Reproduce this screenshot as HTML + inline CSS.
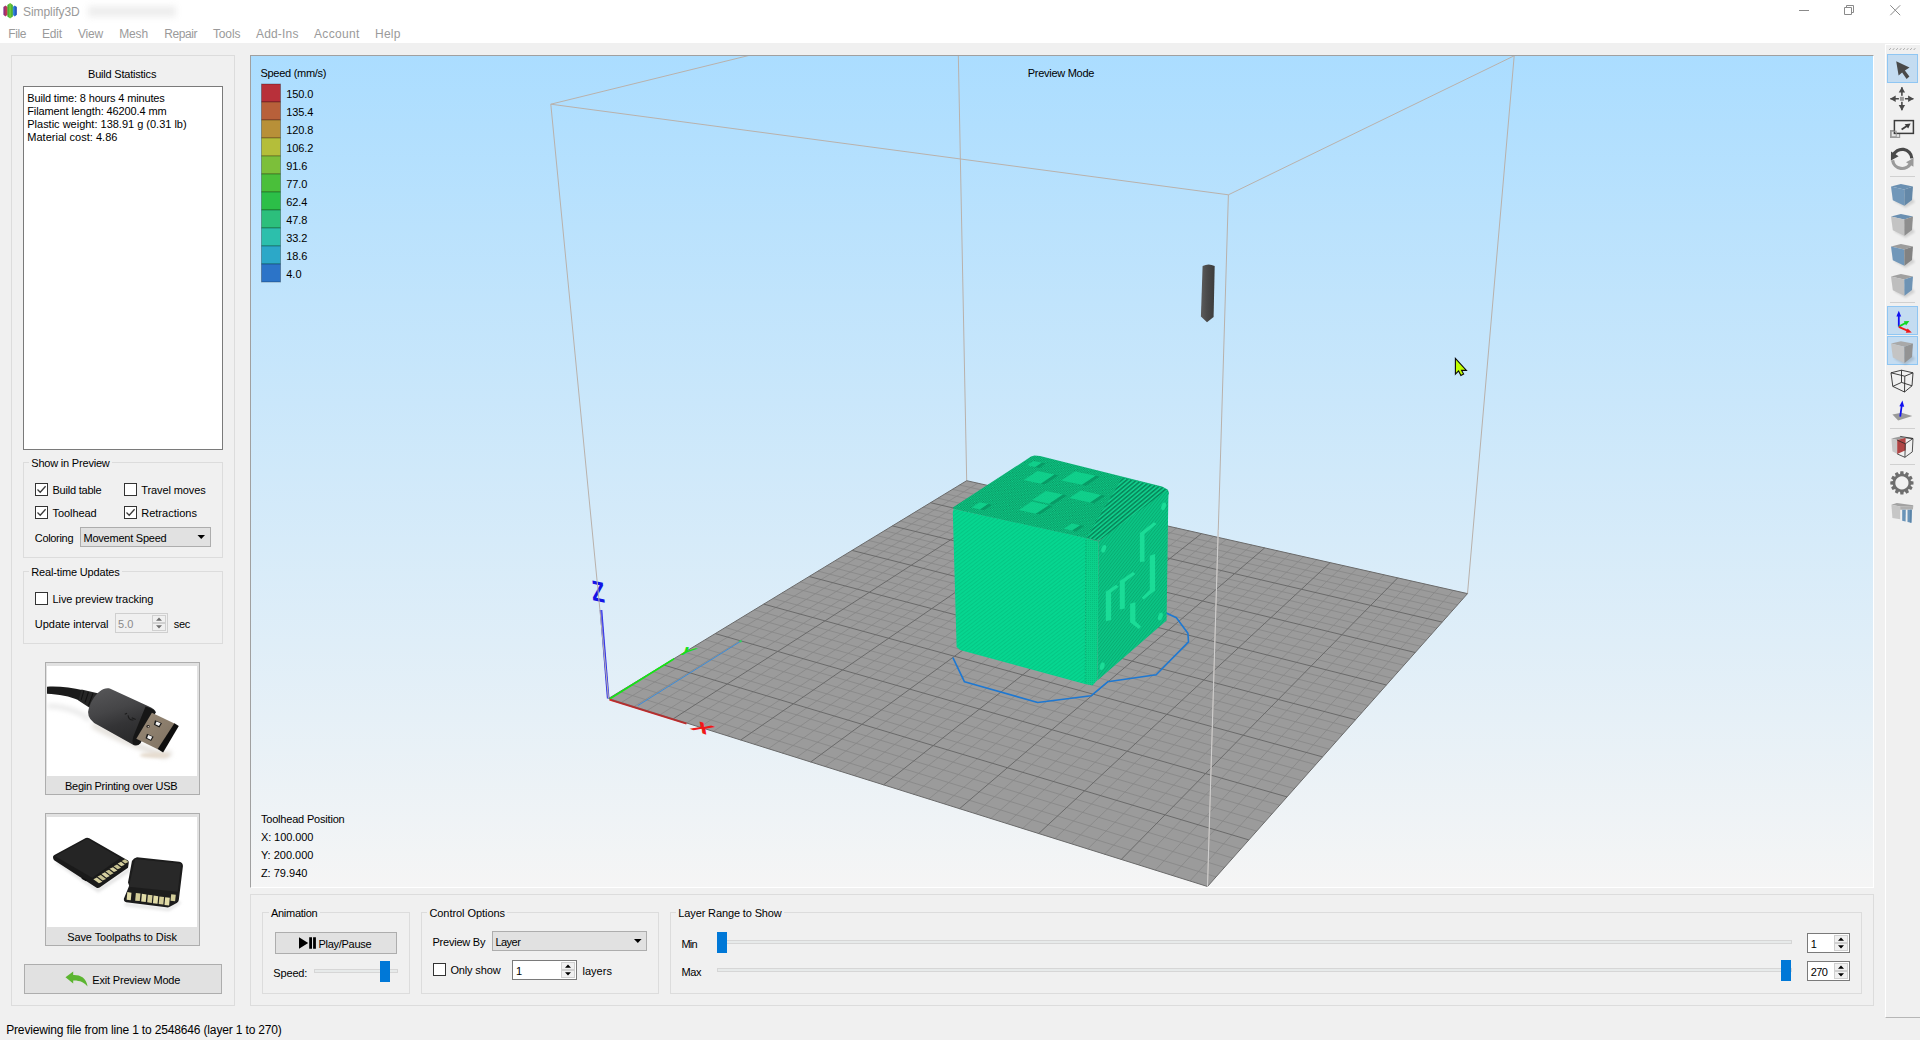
<!DOCTYPE html>
<html><head><meta charset="utf-8"><title>Simplify3D</title>
<style>
html,body{margin:0;padding:0}
body{width:1920px;height:1040px;overflow:hidden;background:#f0f0f0;position:relative;font-family:"Liberation Sans", sans-serif;font-size:11px}
.t{position:absolute;white-space:pre;line-height:1;font-family:"Liberation Sans", sans-serif}
.a{position:absolute;box-sizing:border-box}

.gb{position:absolute;box-sizing:border-box;border:1px solid #dcdcdc}
.cb{position:absolute;box-sizing:border-box;width:13px;height:13px;border:1px solid #333;background:#fff}
.btn{position:absolute;box-sizing:border-box;border:1px solid #adadad;background:#e1e1e1}
.gt{position:absolute;background:#f0f0f0;height:12px}
.spin{position:absolute;box-sizing:border-box;border:1px solid #7a7a7a;background:#fff}
.groove{position:absolute;box-sizing:border-box;height:4px;background:#e7eaea;border:1px solid #d6d6d6}
.handle{position:absolute;background:#0078d7}
.sel{position:absolute;box-sizing:border-box;background:#c4dcf1;border:1px solid #8fc6f3}
.sep{position:absolute;height:1px;background:#d0d0d0}

</style></head><body>
<div class="a" style="left:0px;top:0px;width:1920px;height:43px;background:#fff"></div>
<svg class="a" style="left:0;top:0" width="22" height="22" viewBox="0 0 22 22">
<defs><linearGradient id="ic1" x1="0" x2="1"><stop offset="0" stop-color="#7a2a8c"/><stop offset="1" stop-color="#e0403a"/></linearGradient>
<linearGradient id="ic2" x1="0" x2="1"><stop offset="0" stop-color="#2f9a2a"/><stop offset=".5" stop-color="#7ad03a"/><stop offset="1" stop-color="#2f9a2a"/></linearGradient>
<linearGradient id="ic3" x1="0" x2="1"><stop offset="0" stop-color="#3aa0e8"/><stop offset="1" stop-color="#1a3fae"/></linearGradient></defs>
<path d="M3.4 7 L5.5 5.4 L7.6 7 V14.8 L5.5 16.4 L3.4 14.8Z" fill="url(#ic1)"/>
<path d="M12.6 7 L14.7 5.4 L16.8 7 V14.8 L14.7 16.4 L12.6 14.8Z" fill="url(#ic3)"/>
<path d="M7.4 5 L10.1 3 L12.8 5 V16.6 L10.1 18.6 L7.4 16.6Z" fill="url(#ic2)"/>
</svg>
<div class="a" style="left:88px;top:6px;width:88px;height:11px;background:#eeeeee;filter:blur(3px)"></div>
<svg class="a" style="left:1780px;top:0" width="140" height="22" viewBox="0 0 140 22">
<path d="M19 10.5 H29" stroke="#8a8a8a" stroke-width="1" fill="none"/>
<path d="M64.5 7.5 H71.5 V14.5 H64.5Z M66.5 7.5 V5.5 H73.5 V12.5 H71.5" stroke="#8a8a8a" stroke-width="1" fill="none"/>
<path d="M110.3 5.3 L120.2 15.2 M120.2 5.3 L110.3 15.2" stroke="#8a8a8a" stroke-width="1" fill="none"/>
</svg>
<div class="gb" style="left:11px;top:55px;width:224px;height:951px;"></div>
<div class="a" style="left:23px;top:86px;width:200px;height:364px;border:1px solid #7a7a7a;background:#fff"></div>
<div class="gb" style="left:23px;top:462px;width:200px;height:96px;"></div>
<div class="gt" style="left:29px;top:458px;width:83px;height:12px;"></div>
<div class="gb" style="left:23px;top:571px;width:200px;height:73px;"></div>
<div class="gt" style="left:29px;top:567px;width:93px;height:12px;"></div>
<div class="cb" style="left:35px;top:483px"><svg width="11" height="11" viewBox="0 0 11 11" style="position:absolute;left:0;top:0"><path d="M1.5 5.5 L4.2 8.2 L9.6 2.2" fill="none" stroke="#3a3a3a" stroke-width="1.3"/></svg></div>
<div class="cb" style="left:124px;top:483px"></div>
<div class="cb" style="left:35px;top:506px"><svg width="11" height="11" viewBox="0 0 11 11" style="position:absolute;left:0;top:0"><path d="M1.5 5.5 L4.2 8.2 L9.6 2.2" fill="none" stroke="#3a3a3a" stroke-width="1.3"/></svg></div>
<div class="cb" style="left:124px;top:506px"><svg width="11" height="11" viewBox="0 0 11 11" style="position:absolute;left:0;top:0"><path d="M1.5 5.5 L4.2 8.2 L9.6 2.2" fill="none" stroke="#3a3a3a" stroke-width="1.3"/></svg></div>
<div class="btn" style="left:80px;top:527px;width:131px;height:20px;"></div>
<svg class="a" style="left:196px;top:534px" width="10" height="6"><path d="M1.5 1 H9 L5.25 5Z" fill="#000"/></svg>
<div class="cb" style="left:35px;top:592px"></div>
<div class="a" style="left:115px;top:613px;width:53px;height:20px;border:1px solid #cfcfcf;background:#f0f0f0"></div>
<div class="a" style="left:152px;top:615px;width:14px;height:8px;border:1px solid #d0d0d0;background:#f0f0f0"></div><div class="a" style="left:152px;top:623px;width:14px;height:8px;border:1px solid #d0d0d0;background:#f0f0f0"></div><svg class="a" style="left:152px;top:615px" width="14" height="16"><path d="M4 5.8 l3 -3.2 l3 3.2z M4 10.2 l3 3.2 l3 -3.2z" fill="#6e6e6e"/></svg>
<div class="btn" style="left:45px;top:662px;width:155px;height:133px;"></div>
<div class="a" style="left:47px;top:666px;width:150px;height:110px;background:#fff"></div>
<svg class="a" style="left:47px;top:666px" width="150" height="110" viewBox="26 52 1299.75 953.15"><defs><filter id="bl1" x="-20%" y="-50%" width="140%" height="200%"><feGaussianBlur stdDeviation="22"/></filter>
<filter id="bl2" x="-20%" y="-50%" width="140%" height="200%"><feGaussianBlur stdDeviation="14"/></filter>
<linearGradient id="ub" x1="0" y1="0" x2="0.35" y2="1"><stop offset="0" stop-color="#58585a"/><stop offset=".45" stop-color="#454547"/><stop offset=".7" stop-color="#343436"/><stop offset="1" stop-color="#2a2a2b"/></linearGradient>
<linearGradient id="um" x1="0" y1="0" x2="1" y2="1"><stop offset="0" stop-color="#9a8b78"/><stop offset="1" stop-color="#7d7060"/></linearGradient></defs>
<path d="M30 400 C150 395 300 440 400 520" stroke="#e4e4e4" stroke-width="34" fill="none" filter="url(#bl1)"/>
<path d="M420 560 C560 640 700 700 800 740 L1040 830 L1100 800" stroke="#e0dcd6" stroke-width="46" fill="none" filter="url(#bl1)"/>
<ellipse cx="960" cy="825" rx="130" ry="24" fill="#e6dccf" filter="url(#bl2)"/>
<path d="M26 232 C130 226 240 240 340 262 L305 352 C225 312 125 296 26 292Z" fill="#1b1b1b"/>
<path d="M325 256 L475 290 L398 415 L298 352Z" fill="#262626"/>
<path d="M345 268 L322 345 M385 278 L355 370 M425 288 L385 395" stroke="#111" stroke-width="9" fill="none"/>
<path d="M382 450 C392 380 440 300 482 272 C515 248 545 240 575 250 L905 400 Q965 425 968 452 L835 722 Q815 748 780 738 L470 566 Q380 520 382 450Z" fill="url(#ub)"/>
<path d="M880 402 Q955 425 968 452 L835 722 Q812 745 772 730 Q760 700 775 660Z" fill="#161616"/>
<path d="M935 458 L1135 552 L990 775 L800 682Z" fill="url(#um)"/>
<path d="M1130 548 L1168 572 L1032 802 L985 772Z" fill="#0e0e0e"/>
<path d="M962 522 L1022 548 L1000 585 L952 562Z" fill="#1a1a1a"/><path d="M975 533 L1010 549 L996 572 L965 557Z" fill="#f4f4f4"/>
<path d="M892 638 L950 665 L928 702 L880 678Z" fill="#1a1a1a"/><path d="M904 650 L938 666 L924 690 L893 675Z" fill="#f4f4f4"/>
<ellipse cx="902" cy="576" rx="15" ry="12" fill="#2a2622"/><ellipse cx="905" cy="577" rx="7" ry="6" fill="#d8d0c8"/>
<path d="M700 470 L720 462 M728 480 Q735 525 775 520 M760 500 L795 515" stroke="#1c1c1c" stroke-width="9" fill="none"/>
</svg>
<div class="btn" style="left:45px;top:813px;width:155px;height:133px;"></div>
<div class="a" style="left:47px;top:817px;width:150px;height:110px;background:#fff"></div>
<svg class="a" style="left:47px;top:817px" width="150" height="110" viewBox="26 43.3 1299.75 953.15"><defs><filter id="bl3" x="-20%" y="-50%" width="140%" height="200%"><feGaussianBlur stdDeviation="14"/></filter></defs>
<path d="M110 430 L470 680 L740 500" stroke="#e2e2e2" stroke-width="30" fill="none" filter="url(#bl3)"/>
<path d="M700 800 L1080 845 L1180 780" stroke="#e2e2e2" stroke-width="26" fill="none" filter="url(#bl3)"/>
<path d="M78 392 Q76 380 90 372 L362 226 Q376 219 392 228 L728 420 Q738 428 734 445 L728 482 L482 655 Q468 664 452 654 L88 418 Q79 410 78 392Z" fill="#1a1a1a"/>
<path d="M96 384 L374 232 L660 398 L418 570Z" fill="#252525"/>
<path d="M330 565 L375 590 L365 600 L325 578Z" fill="#111"/>
<polygon points="428,582 458,568 506,604 476,618" fill="#d6d0a0"/><polygon points="463,559 493,545 538,580 508,594" fill="#c6c090"/><polygon points="498,537 528,523 570,555 540,569" fill="#d6d0a0"/><polygon points="533,514 563,500 603,531 573,545" fill="#c6c090"/><polygon points="568,492 598,478 636,506 606,520" fill="#d6d0a0"/><polygon points="603,469 633,455 668,482 638,496" fill="#c6c090"/><polygon points="638,446 668,432 700,457 670,471" fill="#d6d0a0"/><polygon points="673,424 703,410 733,433 703,447" fill="#c6c090"/>
<path d="M762 425 Q778 398 806 392 L1172 430 Q1204 438 1204 468 L1168 762 Q1166 778 1150 788 L1090 822 Q1076 830 1058 826 L712 782 Q690 776 692 752 L738 640 L728 610Z" fill="#1c1c1c"/>
<path d="M790 408 L1188 448 L1158 690 L735 648Z" fill="#282828"/>
<polygon points="722,694 758,699 752,765 716,760" fill="#e2dca8"/><polygon points="796,702 836,706 830,772 790,768" fill="#d2cc98"/><polygon points="848,709 888,714 882,780 842,775" fill="#e2dca8"/><polygon points="900,716 940,722 934,788 894,782" fill="#d2cc98"/><polygon points="950,724 990,729 984,795 944,790" fill="#e2dca8"/><polygon points="1000,732 1040,736 1034,802 994,798" fill="#d2cc98"/><polygon points="1050,739 1090,744 1084,810 1044,805" fill="#e2dca8"/><polygon points="1102,712 1142,717 1136,773 1096,768" fill="#d2cc98"/></svg>
<div class="btn" style="left:24px;top:964px;width:198px;height:30px;"></div>
<svg class="a" style="left:64px;top:970px" width="26" height="19" viewBox="0 0 26 19">
<path d="M1.5 7.2 L9.2 1.6 V4.9 C16 4.6 22.5 7.5 23.6 16.6 C20.6 12.2 15.4 10.2 9.2 10.4 V13.6Z" fill="#5cb531"/></svg>
<div class="a" style="left:250px;top:55px;width:1624px;height:833px;border-top:1px solid #a0a0a0;border-left:1px solid #a0a0a0;border-right:1px solid #fff;border-bottom:1px solid #fff"></div>
<div class="gb" style="left:250px;top:894px;width:1624px;height:112px;"></div>
<div class="gb" style="left:262px;top:912px;width:148px;height:82px;"></div>
<div class="gt" style="left:269px;top:908px;width:51px;height:12px;"></div>
<div class="gb" style="left:421px;top:912px;width:238px;height:82px;"></div>
<div class="gt" style="left:427px;top:908px;width:80px;height:12px;"></div>
<div class="gb" style="left:670px;top:912px;width:1192px;height:82px;"></div>
<div class="gt" style="left:676px;top:908px;width:108px;height:12px;"></div>
<div class="btn" style="left:275px;top:932px;width:122px;height:22px;"></div>
<svg class="a" style="left:298px;top:936px" width="18" height="14"><path d="M1 1.3 L10.2 7 L1 12.7Z M11.2 1.3 h2.8 v11.4 h-2.8z M15.1 1.3 h2.8 v11.4 h-2.8z" fill="#000"/></svg>
<div class="groove" style="left:314px;top:969px;width:84px;height:4px;"></div>
<div class="handle" style="left:380px;top:961px;width:10px;height:21px;"></div>
<div class="btn" style="left:492px;top:931px;width:155px;height:20px;"></div>
<svg class="a" style="left:633px;top:938px" width="10" height="6"><path d="M1 1 H8.6 L4.8 5Z" fill="#000"/></svg>
<div class="cb" style="left:433px;top:963px"></div>
<div class="spin" style="left:512px;top:960px;width:65px;height:20px;"></div>
<div class="a" style="left:561px;top:962px;width:14px;height:8px;border:1px solid #d0d0d0;background:#f0f0f0"></div><div class="a" style="left:561px;top:970px;width:14px;height:8px;border:1px solid #d0d0d0;background:#f0f0f0"></div><svg class="a" style="left:561px;top:962px" width="14" height="16"><path d="M4 5.8 l3 -3.2 l3 3.2z M4 10.2 l3 3.2 l3 -3.2z" fill="#000"/></svg>
<div class="groove" style="left:717px;top:940px;width:1075px;height:4px;"></div>
<div class="groove" style="left:717px;top:968px;width:1075px;height:4px;"></div>
<div class="handle" style="left:717px;top:932px;width:10px;height:21px;"></div>
<div class="handle" style="left:1781px;top:960px;width:10px;height:21px;"></div>
<div class="spin" style="left:1807px;top:933px;width:43px;height:20px;"></div>
<div class="a" style="left:1834px;top:935px;width:14px;height:8px;border:1px solid #d0d0d0;background:#f0f0f0"></div><div class="a" style="left:1834px;top:943px;width:14px;height:8px;border:1px solid #d0d0d0;background:#f0f0f0"></div><svg class="a" style="left:1834px;top:935px" width="14" height="16"><path d="M4 5.8 l3 -3.2 l3 3.2z M4 10.2 l3 3.2 l3 -3.2z" fill="#000"/></svg>
<div class="spin" style="left:1807px;top:961px;width:43px;height:20px;"></div>
<div class="a" style="left:1834px;top:963px;width:14px;height:8px;border:1px solid #d0d0d0;background:#f0f0f0"></div><div class="a" style="left:1834px;top:971px;width:14px;height:8px;border:1px solid #d0d0d0;background:#f0f0f0"></div><svg class="a" style="left:1834px;top:963px" width="14" height="16"><path d="M4 5.8 l3 -3.2 l3 3.2z M4 10.2 l3 3.2 l3 -3.2z" fill="#000"/></svg>
<div class="a" style="left:1885px;top:44px;width:36px;height:974px;border-left:1px solid #fff;border-top:1px solid #fff;border-bottom:1px solid #b6b6b6"></div>
<div class="sel" style="left:1887px;top:54px;width:31px;height:29px"></div>
<div class="sel" style="left:1887px;top:306px;width:31px;height:29px"></div>
<div class="sel" style="left:1887px;top:336px;width:31px;height:29px"></div>
<div class="sep" style="left:1890px;top:176px;width:25px"></div>
<div class="sep" style="left:1890px;top:302px;width:25px"></div>
<div class="sep" style="left:1890px;top:428px;width:25px"></div>
<div class="sep" style="left:1890px;top:464px;width:25px"></div>
<svg class="a" style="left:1886px;top:44px" width="34" height="974" viewBox="1886 44 34 974"><path d="M1889.2 50 l1.6 -1.8" stroke="#a8a8a8" stroke-width="1"/><path d="M1892.7 50 l1.6 -1.8" stroke="#a8a8a8" stroke-width="1"/><path d="M1896.2 50 l1.6 -1.8" stroke="#a8a8a8" stroke-width="1"/><path d="M1899.7 50 l1.6 -1.8" stroke="#a8a8a8" stroke-width="1"/><path d="M1903.2 50 l1.6 -1.8" stroke="#a8a8a8" stroke-width="1"/><path d="M1906.7 50 l1.6 -1.8" stroke="#a8a8a8" stroke-width="1"/><path d="M1910.2 50 l1.6 -1.8" stroke="#a8a8a8" stroke-width="1"/><path d="M1913.7 50 l1.6 -1.8" stroke="#a8a8a8" stroke-width="1"/><polygon points="1896.2,61.3 1909.5,67.6 1904.9,70.4 1909.4,76.4 1906.6,78.9 1902.1,72.5 1898.6,75.5" fill="#4a4a4a"/><path d="M1901.9 87.3 v23 M1890.4 98.8 h23" stroke="#4a4a4a" stroke-width="1.6" fill="none"/><rect x="1898.9" y="95.8" width="6" height="6" fill="#f0f0f0"/><rect x="1899.9" y="96.8" width="4" height="4" fill="#9a9a9a"/><polygon points="1901.9,87.0 1905.1,92.6 1898.7,92.6" fill="#4a4a4a"/><polygon points="1901.9,110.6 1898.7,105.0 1905.1,105.0" fill="#4a4a4a"/><polygon points="1890.1,98.8 1895.7,95.6 1895.7,102.0" fill="#4a4a4a"/><polygon points="1913.7,98.8 1908.1,102.0 1908.1,95.6" fill="#4a4a4a"/><rect x="1890.6" y="130.6" width="9" height="6.8" fill="#e6e6e6" stroke="#9a9a9a" stroke-width="1.2"/><rect x="1894.4" y="120.6" width="19" height="12.8" fill="#f0f0f0" stroke="#3c3c3c" stroke-width="1.5"/><rect x="1891.2" y="131.2" width="5" height="5.6" fill="none" stroke="#9a9a9a" stroke-width="1"/><path d="M1901.6 129.4 L1907.6 125.4" stroke="#3c3c3c" stroke-width="1.8"/><polygon points="1910.6,123.4 1904.6,124.2 1908.2,128.6" fill="#3c3c3c"/><path d="M1893.2 155.6 A9.6 9.6 0 0 1 1911.8 158.3" stroke="#4a4a4a" stroke-width="3.2" fill="none"/><polygon points="1890.9,160.4 1891.0,151.6 1898.6,156.2" fill="#4a4a4a"/><path d="M1892.6 160.2 A9.6 9.6 0 0 0 1910.8 163.0" stroke="#9a9a9a" stroke-width="3.2" fill="none"/><polygon points="1913.6,158.0 1913.4,166.8 1906.0,162.2" fill="#9a9a9a"/><defs><filter id="tbl" x="-30%" y="-30%" width="160%" height="160%"><feGaussianBlur stdDeviation="1.2"/></filter></defs><polygon points="1893.8,201.3 1905.5,207.8 1915.0,201.9 1910.0,195.9" fill="#000" opacity="0.13" filter="url(#tbl)"/><polygon points="1891.0,186.4 1900.9,184.1 1913.0,186.4 1904.2,189.6" fill="#6a8fb1"/><polygon points="1891.0,186.4 1904.2,189.6 1904.5,205.8 1892.8,200.3" fill="#7197b9"/><polygon points="1904.2,189.6 1913.0,186.4 1912.0,199.9 1904.5,205.8" fill="#6488a8"/><polygon points="1893.8,231.3 1905.5,237.8 1915.0,231.9 1910.0,225.9" fill="#000" opacity="0.13" filter="url(#tbl)"/><polygon points="1891.0,216.4 1900.9,214.1 1913.0,216.4 1904.2,219.6" fill="#6a8fb1"/><polygon points="1891.0,216.4 1904.2,219.6 1904.5,235.8 1892.8,230.3" fill="#c3c3c3"/><polygon points="1904.2,219.6 1913.0,216.4 1912.0,229.9 1904.5,235.8" fill="#8e8e8e"/><polygon points="1893.8,261.3 1905.5,267.8 1915.0,261.9 1910.0,255.9" fill="#000" opacity="0.13" filter="url(#tbl)"/><polygon points="1891.0,246.4 1900.9,244.1 1913.0,246.4 1904.2,249.6" fill="#9c9c9c"/><polygon points="1891.0,246.4 1904.2,249.6 1904.5,265.8 1892.8,260.3" fill="#7197b9"/><polygon points="1904.2,249.6 1913.0,246.4 1912.0,259.9 1904.5,265.8" fill="#828282"/><polygon points="1893.8,291.3 1905.5,297.8 1915.0,291.9 1910.0,285.9" fill="#000" opacity="0.13" filter="url(#tbl)"/><polygon points="1891.0,276.4 1900.9,274.1 1913.0,276.4 1904.2,279.6" fill="#a0a0a0"/><polygon points="1891.0,276.4 1904.2,279.6 1904.5,295.8 1892.8,290.3" fill="#bebebe"/><polygon points="1904.2,279.6 1913.0,276.4 1912.0,289.9 1904.5,295.8" fill="#6e93b4"/><path d="M1898.8 326.6 V314" stroke="#1010f0" stroke-width="1.8"/><polygon points="1898.8,310.8 1896.4,316.4 1901.2,316.4" fill="#1010f0"/><path d="M1898.8 326.6 L1906 322.8" stroke="#10d820" stroke-width="1.8"/><polygon points="1909.4,321 1903.8,321.2 1906,325.4" fill="#10d820"/><path d="M1898.8 326.8 L1908 330.8" stroke="#f01818" stroke-width="1.8"/><polygon points="1911.8,332.4 1907.6,328.4 1905.8,332.8" fill="#f01818"/><polygon points="1893.8,358.5 1905.5,365.0 1915.0,359.1 1910.0,353.1" fill="#000" opacity="0.13" filter="url(#tbl)"/><polygon points="1891.0,343.6 1900.9,341.3 1913.0,343.6 1904.2,346.8" fill="#a9a9a9"/><polygon points="1891.0,343.6 1904.2,346.8 1904.5,363.0 1892.8,357.5" fill="#c4c4c4"/><polygon points="1904.2,346.8 1913.0,343.6 1912.0,357.1 1904.5,363.0" fill="#939393"/><path d="M1891.0 372.8L1901.5 370.2M1901.5 370.2L1913.0 372.8M1913.0 372.8L1904.8 376.2M1904.8 376.2L1891.0 372.8M1891.0 372.8L1892.8 386.4M1904.8 376.2L1904.5 392.0M1913.0 372.8L1912.0 385.8M1901.5 370.2L1901.5 382.4M1892.8 386.4L1904.5 392.0M1904.5 392.0L1912.0 385.8M1912.0 385.8L1901.5 382.4M1901.5 382.4L1892.8 386.4" stroke="#2a2a2a" stroke-width="0.9" fill="none"/><polygon points="1892.4,414.4 1901.5,412.8 1912.3,416 1898.2,420.6" fill="#9a9a9a"/><path d="M1900.2 416.6 L1901.8 405" stroke="#1010f0" stroke-width="1.8"/><polygon points="1902.4,400.6 1899.4,406.2 1904.2,406.8" fill="#1010f0"/><polygon points="1891.4,438.5 1900.2,436.4 1905.6,437.8 1897.2,440.1" fill="#9c9c9c"/><polygon points="1891.4,438.5 1897.2,440.1 1897.2,453.9 1892.4,451.2" fill="#c8c8c8"/><polygon points="1897.2,440.1 1905.6,437.8 1905.6,450.3 1897.2,453.9" fill="#b04444"/><path d="M1905.6 437.8L1913.0 438.5M1913.0 438.5L1912.3 451.9M1912.3 451.9L1904.9 457.3M1904.9 457.3L1897.2 453.9M1904.9 457.3L1905.3 443.8M1905.3 443.8L1913.0 438.5M1905.3 443.8L1897.2 440.1M1900.2 436.4L1913.0 438.5" stroke="#2a2a2a" stroke-width="0.8" fill="none"/><path d="M1913.50,481.38 L1913.50,484.42 L1910.92,484.73 L1910.62,485.83 L1912.71,487.39 L1911.19,490.01 L1908.79,488.99 L1907.99,489.79 L1909.01,492.19 L1906.39,493.71 L1904.83,491.62 L1903.73,491.92 L1903.42,494.50 L1900.38,494.50 L1900.07,491.92 L1898.97,491.62 L1897.41,493.71 L1894.79,492.19 L1895.81,489.79 L1895.01,488.99 L1892.61,490.01 L1891.09,487.39 L1893.18,485.83 L1892.88,484.73 L1890.30,484.42 L1890.30,481.38 L1892.88,481.07 L1893.18,479.97 L1891.09,478.41 L1892.61,475.79 L1895.01,476.81 L1895.81,476.01 L1894.79,473.61 L1897.41,472.09 L1898.97,474.18 L1900.07,473.88 L1900.38,471.30 L1903.42,471.30 L1903.73,473.88 L1904.83,474.18 L1906.39,472.09 L1909.01,473.61 L1907.99,476.01 L1908.79,476.81 L1911.19,475.79 L1912.71,478.41 L1910.62,479.97 L1910.92,481.07 Z M1901.9 476.3 a6.6 6.6 0 1 0 0.01 0Z" fill="#6e6e6e" fill-rule="evenodd"/><polygon points="1891.4,504.7 1896.8,503.1 1913.2,505.2 1913.2,506.2 1900.2,506.6" fill="#a2a2a2"/><polygon points="1891.4,504.7 1900.2,506.6 1900.2,519.2 1892.4,517.9" fill="#c6c6c6"/><polygon points="1900.2,506.6 1913.2,505.9 1913.0,509.5 1900.2,509.8" fill="#b0b0b0"/><polygon points="1902.2,509.8 1905.8,509.8 1905.6,521.4 1902.2,520.7" fill="#6a94b8"/><polygon points="1907.5,509.8 1911.8,509.8 1911.4,522.7 1907.5,522.0" fill="#6a94b8"/><polygon points="1910.1,509.8 1911.8,509.8 1911.4,522.7 1909.9,522.4" fill="#5a84a8"/></svg>
<svg class="a" style="left:251px;top:56px" width="1622" height="831" viewBox="251 56 1622 831">
<defs>
<linearGradient id="sky" x1="0" y1="0" x2="0" y2="1"><stop offset="0" stop-color="#abddff"/><stop offset="1" stop-color="#f5f5f5"/></linearGradient>
<pattern id="hL" width="3" height="3" patternUnits="userSpaceOnUse" patternTransform="rotate(-38)"><rect width="3" height="3" fill="#06d690"/><rect width="3" height="0.9" fill="#04c583"/></pattern>
<pattern id="hR" width="2.4" height="2.4" patternUnits="userSpaceOnUse" patternTransform="rotate(-52)"><rect width="2.4" height="2.4" fill="#0bc585"/><rect width="2.4" height="0.9" fill="#08ad72"/></pattern>
<pattern id="hT" width="2.2" height="2.2" patternUnits="userSpaceOnUse" patternTransform="rotate(9)"><rect width="2.2" height="2.2" fill="#0fd28c"/><rect width="1.1" height="1.1" fill="#09915f"/><rect x="1.1" y="1.1" width="1.1" height="1.1" fill="#09915f"/></pattern>
<pattern id="hB" width="3.2" height="3.2" patternUnits="userSpaceOnUse" patternTransform="rotate(-40)"><rect width="3.2" height="3.2" fill="#10cc8a"/><rect width="3.2" height="1.5" fill="#07875a"/></pattern>
<pattern id="hE" width="2" height="2" patternUnits="userSpaceOnUse"><rect width="2" height="2" fill="#0bd08a"/><rect width="1" height="1" fill="#07c07e"/></pattern>
<linearGradient id="th" x1="0" x2="1"><stop offset="0" stop-color="#5c5c5c"/><stop offset=".45" stop-color="#4a4a4a"/><stop offset="1" stop-color="#3c3c3c"/></linearGradient>
</defs>
<rect x="251" y="56" width="1622" height="831" fill="url(#sky)"/>
<line x1="550.8" y1="104.2" x2="808.1" y2="40.9" stroke="#b9b1ab" stroke-width="1"/>
<line x1="966.7" y1="480.7" x2="957.5" y2="13.0" stroke="#b9b1ab" stroke-width="1"/>
<line x1="1514.2" y1="55.8" x2="1467.5" y2="593.6" stroke="#b9b1ab" stroke-width="1"/>
<polygon points="608.5,698.5 1207.5,886.5 1467.5,593.6 966.7,480.7" fill="#9b9b9b"/>
<path d="M621.3 702.5L977.8 483.2M619.8 691.6L1216.0 876.9M634.1 706.5L988.9 485.7M631.0 684.8L1224.4 867.4M647.1 710.6L1000.1 488.2M642.0 678.1L1232.7 858.1M660.2 714.7L1011.4 490.8M652.9 671.5L1240.8 849.0M686.6 723.0L1034.1 495.9M674.3 658.5L1256.7 831.1M699.9 727.2L1045.6 498.5M684.7 652.2L1264.5 822.3M713.4 731.4L1057.2 501.1M695.0 645.9L1272.1 813.7M727.0 735.7L1068.8 503.7M705.2 639.7L1279.7 805.2M754.5 744.3L1092.2 509.0M725.2 627.5L1294.4 788.6M768.4 748.7L1104.0 511.7M735.0 621.6L1301.6 780.5M782.4 753.1L1116.0 514.3M744.7 615.7L1308.7 772.5M796.5 757.5L1127.9 517.0M754.3 609.9L1315.7 764.6M825.1 766.5L1152.1 522.5M773.0 598.5L1329.3 749.2M839.5 771.0L1164.3 525.2M782.2 592.9L1336.0 741.7M854.1 775.6L1176.6 528.0M791.3 587.3L1342.6 734.3M868.8 780.2L1188.9 530.8M800.3 581.9L1349.2 726.9M898.5 789.5L1213.9 536.4M818.0 571.1L1361.9 712.6M913.6 794.3L1226.5 539.3M826.6 565.9L1368.1 705.5M928.8 799.0L1239.1 542.1M835.2 560.7L1374.3 698.6M944.1 803.8L1251.9 545.0M843.7 555.5L1380.4 691.7M975.1 813.6L1277.6 550.8M860.3 545.4L1392.3 678.3M990.8 818.5L1290.6 553.7M868.5 540.4L1398.1 671.8M1006.6 823.5L1303.7 556.7M876.6 535.5L1403.9 665.3M1022.6 828.5L1316.9 559.6M884.5 530.7L1409.6 658.9M1054.9 838.6L1343.5 565.6M900.2 521.1L1420.7 646.3M1071.3 843.7L1356.9 568.7M908.0 516.4L1426.2 640.2M1087.8 848.9L1370.4 571.7M915.6 511.8L1431.6 634.1M1104.5 854.2L1384.0 574.8M923.1 507.2L1436.9 628.1M1138.2 864.8L1411.5 581.0M938.0 498.2L1447.4 616.3M1155.3 870.1L1425.3 584.1M945.3 493.7L1452.5 610.5M1172.5 875.5L1439.3 587.2M952.5 489.3L1457.6 604.8M1189.9 881.0L1453.3 590.4M959.6 485.0L1462.6 599.2" stroke="#878787" stroke-width="0.8" fill="none"/>
<path d="M608.5 698.5L966.7 480.7M608.5 698.5L1207.5 886.5M673.3 718.8L1022.7 493.3M663.7 665.0L1248.8 839.9M740.7 740.0L1080.5 506.3M715.3 633.6L1287.1 796.9M810.7 762.0L1140.0 519.8M763.7 604.1L1322.6 756.9M883.6 784.8L1201.4 533.6M809.2 576.5L1355.6 719.7M959.5 808.7L1264.7 547.9M852.0 550.4L1386.4 685.0M1038.7 833.5L1330.1 562.6M892.4 525.9L1415.2 652.5M1121.3 859.4L1397.7 577.9M930.6 502.7L1442.2 622.1M1207.5 886.5L1467.5 593.6M966.7 480.7L1467.5 593.6" stroke="#6a6a6a" stroke-width="1" fill="none"/>
<line x1="637.7" y1="705.7" x2="740.3" y2="641.5" stroke="#3c8cd8" stroke-width="1"/>
<circle cx="740.5" cy="641.3" r="1.2" fill="#30d060"/>
<polyline points="952.9,657.6 964.5,681.8 1037.7,702.5 1091.0,695.8 1107.7,681.8 1156.2,674.8 1188.5,641.9 1187.9,633.3 1176.4,617.7 1160.0,610.0" fill="none" stroke="#1e78d2" stroke-width="1.6" stroke-linejoin="round"/>
<polygon points="1034.5,455.4 1040,456 1162,486.6 1167.6,489.6 1169,494 1098,541 1085,538 953.7,508.9 952.8,507.6 1031,456.6" fill="url(#hT)"/><polygon points="1122,478 1163,487.4 1168.6,491 1099,540.6 1087,537.6" fill="url(#hB)"/><polygon points="1023.7,480.0 1040.8,483.7 1054.5,474.6 1037.5,471.0" fill="#12d892" opacity="0.75"/><polygon points="1040.8,483.7 1044.7,484.5 1058.4,475.5 1054.5,474.6" fill="#07925f" opacity="0.7"/><polygon points="1061.3,480.4 1082.0,484.8 1095.7,475.8 1075.1,471.4" fill="#12d892" opacity="0.75"/><polygon points="1082.0,484.8 1085.9,485.7 1099.6,476.6 1095.7,475.8" fill="#07925f" opacity="0.7"/><polygon points="1032.2,500.0 1049.3,503.7 1063.0,494.6 1046.0,491.0" fill="#12d892" opacity="0.75"/><polygon points="1049.3,503.7 1053.2,504.5 1066.9,495.5 1063.0,494.6" fill="#07925f" opacity="0.7"/><polygon points="1069.5,498.0 1090.1,502.4 1101.4,495.0 1080.8,490.6" fill="#12d892" opacity="0.75"/><polygon points="1090.1,502.4 1094.0,503.3 1105.3,495.8 1101.4,495.0" fill="#07925f" opacity="0.7"/><polygon points="1018.8,510.1 1035.9,513.8 1048.8,505.3 1031.7,501.6" fill="#12d892" opacity="0.75"/><polygon points="1035.9,513.8 1039.7,514.6 1052.7,506.1 1048.8,505.3" fill="#07925f" opacity="0.7"/><polygon points="1063.8,528.8 1072.1,530.6 1080.2,525.3 1071.9,523.5" fill="#12d892" opacity="0.75"/><polygon points="1072.1,530.6 1076.0,531.4 1084.1,526.1 1080.2,525.3" fill="#07925f" opacity="0.7"/><polygon points="1027.1,465.3 1035.4,467.1 1041.8,462.8 1033.5,461.0" fill="#12d892" opacity="0.75"/><polygon points="1035.4,467.1 1039.2,467.9 1045.7,463.6 1041.8,462.8" fill="#07925f" opacity="0.7"/><polygon points="971.8,507.6 980.0,509.4 988.1,504.1 979.8,502.3" fill="#12d892" opacity="0.75"/><polygon points="980.0,509.4 983.9,510.3 992.0,504.9 988.1,504.1" fill="#07925f" opacity="0.7"/><polygon points="953.7,508.9 1086,538 1085,684 960,650 956.6,647 952.8,512" fill="url(#hL)"/><polygon points="1085.5,538 1098.5,541.4 1097.4,680 1092.6,685.6 1085,684" fill="url(#hE)"/><path d="M1085.8 540 L1085.2 683" stroke="#05b074" stroke-width="1" stroke-dasharray="1.4 1.6" fill="none"/><polygon points="1098.5,541.2 1163.5,492.6 1168.6,491.4 1168.3,500 1166.6,620.6 1097.4,680.4" fill="url(#hR)"/><polygon points="1139.9,532.9 1154.0,522.3 1156.6,524.0 1144.5,533.9 1144.5,561.4 1139.9,562.1" fill="#1bdc97"/><polygon points="1149.8,555.7 1155.1,554.0 1155.1,590.4 1143.5,599.5 1141.8,597.4 1149.8,590.0" fill="#1bdc97"/><polygon points="1119.8,581.1 1132.9,572.0 1135.4,574.1 1124.8,582.0 1124.8,608.6 1119.8,609.5" fill="#1bdc97"/><polygon points="1105.8,591.7 1116.0,584.7 1118.5,586.8 1111.1,592.5 1111.1,620.0 1105.8,621.3" fill="#1bdc97"/><polygon points="1130.1,603.8 1135.4,602.3 1135.4,621.3 1140.9,626.4 1138.8,628.9 1130.1,622.2" fill="#1bdc97"/><ellipse cx="1103.7" cy="548.8" rx="2.2" ry="4" fill="#1bdc97" transform="rotate(18 1103.7 548.8)"/><ellipse cx="1163.6" cy="506.4" rx="2.2" ry="4" fill="#1bdc97" transform="rotate(18 1163.6 506.4)"/><ellipse cx="1160.4" cy="616.5" rx="2.2" ry="4" fill="#1bdc97" transform="rotate(18 1160.4 616.5)"/><ellipse cx="1102.2" cy="666.2" rx="2.2" ry="4" fill="#1bdc97" transform="rotate(18 1102.2 666.2)"/>
<line x1="609.5" y1="699" x2="674.1" y2="658.8" stroke="#14e614" stroke-width="1.6"/>
<line x1="609.5" y1="699.6" x2="686.5" y2="723.6" stroke="#e02020" stroke-width="1.9"/>
<line x1="612" y1="700.4" x2="686" y2="723.4" stroke="#6a4a4a" stroke-width="0.6"/>
<line x1="608.2" y1="698.5" x2="601" y2="610" stroke="#2a2ae6" stroke-width="2.6"/>
<line x1="608.2" y1="698.5" x2="601" y2="610" stroke="#8a8af0" stroke-width="0.6"/>
<text font-family='"Liberation Sans", sans-serif' font-weight="bold" font-size="29" fill="#1414e6" transform="matrix(0.72 0.17 0.075 1 592.4 600)">Z</text>
<text font-family='"Liberation Sans", sans-serif' font-weight="bold" font-size="20" fill="#f01818" transform="matrix(1.278 0.451 -0.685 0.548 689.5 728.8)">X</text>
<text font-family='"Liberation Sans", sans-serif' font-weight="bold" font-size="20" fill="#18e018" transform="matrix(0.95 0.135 -0.76 0.52 675.2 654.1)">Y</text>
<line x1="608.5" y1="698.5" x2="550.8" y2="104.2" stroke="#b9b1ab" stroke-width="1"/>
<line x1="550.8" y1="104.2" x2="1228.4" y2="194.8" stroke="#b9b1ab" stroke-width="1"/>
<line x1="1228.4" y1="194.8" x2="1207.5" y2="886.5" stroke="#b9b1ab" stroke-width="1"/>
<line x1="1228.4" y1="194.8" x2="1514.2" y2="55.8" stroke="#b9b1ab" stroke-width="1"/>
<line x1="1218.2" y1="530" x2="1207.5" y2="886.5" stroke="#cfcfcf" stroke-width="1"/>
<path d="M1202.6 266 Q1208.6 262.8 1214.7 266 L1213.6 317 L1207 322.2 L1200.9 316.6Z" fill="url(#th)"/>
<path d="M1455.4 358.4 V374.2 L1458.6 370.9 L1460.9 375.4 L1463.6 374.1 L1461.6 370.4 H1466.4Z" fill="#c0ff00" stroke="#0a0a0a" stroke-width="1.1" stroke-linejoin="miter"/>
<rect x="261.5" y="84.0" width="19" height="18" fill="#b8303a" stroke="rgba(0,0,0,0.28)" stroke-width="1"/>
<rect x="261.5" y="102.0" width="19" height="18" fill="#b8603a" stroke="rgba(0,0,0,0.28)" stroke-width="1"/>
<rect x="261.5" y="120.0" width="19" height="18" fill="#b89038" stroke="rgba(0,0,0,0.28)" stroke-width="1"/>
<rect x="261.5" y="138.0" width="19" height="18" fill="#b4be3a" stroke="rgba(0,0,0,0.28)" stroke-width="1"/>
<rect x="261.5" y="156.0" width="19" height="18" fill="#7cbf3a" stroke="rgba(0,0,0,0.28)" stroke-width="1"/>
<rect x="261.5" y="174.0" width="19" height="18" fill="#4abf3a" stroke="rgba(0,0,0,0.28)" stroke-width="1"/>
<rect x="261.5" y="192.0" width="19" height="18" fill="#2cbf48" stroke="rgba(0,0,0,0.28)" stroke-width="1"/>
<rect x="261.5" y="210.0" width="19" height="18" fill="#2cbf7c" stroke="rgba(0,0,0,0.28)" stroke-width="1"/>
<rect x="261.5" y="228.0" width="19" height="18" fill="#2cbfac" stroke="rgba(0,0,0,0.28)" stroke-width="1"/>
<rect x="261.5" y="246.0" width="19" height="18" fill="#2ca8c8" stroke="rgba(0,0,0,0.28)" stroke-width="1"/>
<rect x="261.5" y="264.0" width="19" height="18" fill="#2c74c8" stroke="rgba(0,0,0,0.28)" stroke-width="1"/>
</svg>
<span class="t" id="t0" style="left:23.00px;top:6.00px;font-size:12px;color:#999;letter-spacing:-0.062px">Simplify3D</span>
<span class="t" id="t1" style="left:8.25px;top:28.00px;font-size:12px;color:#9a9a9a;letter-spacing:-0.398px">File</span>
<span class="t" id="t2" style="left:42.00px;top:28.00px;font-size:12px;color:#9a9a9a;letter-spacing:-0.179px">Edit</span>
<span class="t" id="t3" style="left:78.00px;top:28.00px;font-size:12px;color:#9a9a9a;letter-spacing:-0.216px">View</span>
<span class="t" id="t4" style="left:119.25px;top:28.00px;font-size:12px;color:#9a9a9a;letter-spacing:-0.148px">Mesh</span>
<span class="t" id="t5" style="left:164.25px;top:28.00px;font-size:12px;color:#9a9a9a;letter-spacing:-0.442px">Repair</span>
<span class="t" id="t6" style="left:213.00px;top:28.00px;font-size:12px;color:#9a9a9a;letter-spacing:-0.154px">Tools</span>
<span class="t" id="t7" style="left:256.00px;top:28.00px;font-size:12px;color:#9a9a9a;letter-spacing:0.173px">Add-Ins</span>
<span class="t" id="t8" style="left:314.00px;top:28.00px;font-size:12px;color:#9a9a9a;letter-spacing:0.340px">Account</span>
<span class="t" id="t9" style="left:375.00px;top:28.00px;font-size:12px;color:#9a9a9a;letter-spacing:0.237px">Help</span>
<span class="t" id="t10" style="left:88.00px;top:69.00px;font-size:11px;color:#000;letter-spacing:-0.209px">Build Statistics</span>
<span class="t" id="t11" style="left:27.25px;top:93.00px;font-size:11px;color:#000;letter-spacing:-0.154px">Build time: 8 hours 4 minutes</span>
<span class="t" id="t12" style="left:27.25px;top:106.00px;font-size:11px;color:#000;letter-spacing:-0.118px">Filament length: 46200.4 mm</span>
<span class="t" id="t13" style="left:27.25px;top:119.00px;font-size:11px;color:#000;letter-spacing:-0.006px">Plastic weight: 138.91 g (0.31 lb)</span>
<span class="t" id="t14" style="left:27.25px;top:132.00px;font-size:11px;color:#000;letter-spacing:0.015px">Material cost: 4.86</span>
<span class="t" id="t15" style="left:31.25px;top:458.00px;font-size:11px;color:#000;letter-spacing:-0.198px">Show in Preview</span>
<span class="t" id="t16" style="left:52.50px;top:485.00px;font-size:11px;color:#000;letter-spacing:-0.223px">Build table</span>
<span class="t" id="t17" style="left:141.25px;top:485.00px;font-size:11px;color:#000;letter-spacing:-0.110px">Travel moves</span>
<span class="t" id="t18" style="left:52.50px;top:508.00px;font-size:11px;color:#000;letter-spacing:-0.072px">Toolhead</span>
<span class="t" id="t19" style="left:141.25px;top:508.00px;font-size:11px;color:#000;letter-spacing:0.001px">Retractions</span>
<span class="t" id="t20" style="left:34.75px;top:533.00px;font-size:11px;color:#000;letter-spacing:-0.317px">Coloring</span>
<span class="t" id="t21" style="left:83.50px;top:533.00px;font-size:11px;color:#000;letter-spacing:-0.236px">Movement Speed</span>
<span class="t" id="t22" style="left:31.25px;top:567.00px;font-size:11px;color:#000;letter-spacing:-0.159px">Real-time Updates</span>
<span class="t" id="t23" style="left:52.50px;top:594.00px;font-size:11px;color:#000;letter-spacing:-0.086px">Live preview tracking</span>
<span class="t" id="t24" style="left:34.75px;top:619.00px;font-size:11px;color:#000;letter-spacing:-0.018px">Update interval</span>
<span class="t" id="t25" style="left:118.10px;top:619.00px;font-size:11px;color:#8a8a8a;letter-spacing:0.052px">5.0</span>
<span class="t" id="t26" style="left:173.75px;top:619.00px;font-size:11px;color:#000;letter-spacing:-0.363px">sec</span>
<span class="t" id="t27" style="left:65.00px;top:781.00px;font-size:11px;color:#000;letter-spacing:-0.274px">Begin Printing over USB</span>
<span class="t" id="t28" style="left:67.20px;top:932.00px;font-size:11px;color:#000;letter-spacing:-0.095px">Save Toolpaths to Disk</span>
<span class="t" id="t29" style="left:92.30px;top:975.00px;font-size:11px;color:#000;letter-spacing:-0.187px">Exit Preview Mode</span>
<span class="t" id="t30" style="left:6.20px;top:1024.00px;font-size:12px;color:#000;letter-spacing:-0.157px">Previewing file from line 1 to 2548646 (layer 1 to 270)</span>
<span class="t" id="t31" style="left:270.90px;top:908.00px;font-size:11px;color:#000;letter-spacing:-0.265px">Animation</span>
<span class="t" id="t32" style="left:318.40px;top:939.00px;font-size:11px;color:#000;letter-spacing:-0.262px">Play/Pause</span>
<span class="t" id="t33" style="left:273.30px;top:968.00px;font-size:11px;color:#000;letter-spacing:-0.155px">Speed:</span>
<span class="t" id="t34" style="left:429.40px;top:908.00px;font-size:11px;color:#000;letter-spacing:-0.053px">Control Options</span>
<span class="t" id="t35" style="left:432.50px;top:937.00px;font-size:11px;color:#000;letter-spacing:-0.226px">Preview By</span>
<span class="t" id="t36" style="left:495.40px;top:937.00px;font-size:11px;color:#000;letter-spacing:-0.508px">Layer</span>
<span class="t" id="t37" style="left:450.40px;top:965.00px;font-size:11px;color:#000;letter-spacing:-0.145px">Only show</span>
<span class="t" id="t38" style="left:516.00px;top:966.00px;font-size:11px;color:#000;letter-spacing:0.000px">1</span>
<span class="t" id="t39" style="left:582.40px;top:966.00px;font-size:11px;color:#000;letter-spacing:0.051px">layers</span>
<span class="t" id="t40" style="left:678.30px;top:908.00px;font-size:11px;color:#000;letter-spacing:-0.128px">Layer Range to Show</span>
<span class="t" id="t41" style="left:681.40px;top:939.00px;font-size:11px;color:#000;letter-spacing:-0.767px">Min</span>
<span class="t" id="t42" style="left:681.40px;top:967.00px;font-size:11px;color:#000;letter-spacing:-0.391px">Max</span>
<span class="t" id="t43" style="left:1810.70px;top:939.00px;font-size:11px;color:#000;letter-spacing:0.000px">1</span>
<span class="t" id="t44" style="left:1810.70px;top:967.00px;font-size:11px;color:#000;letter-spacing:-0.580px">270</span>
<span class="t" id="t45" style="left:260.40px;top:68.00px;font-size:11px;color:#000;letter-spacing:-0.271px">Speed (mm/s)</span>
<span class="t" id="t46" style="left:286.20px;top:89.00px;font-size:11px;color:#000;letter-spacing:-0.083px">150.0</span>
<span class="t" id="t47" style="left:286.20px;top:107.00px;font-size:11px;color:#000;letter-spacing:-0.083px">135.4</span>
<span class="t" id="t48" style="left:286.20px;top:125.00px;font-size:11px;color:#000;letter-spacing:-0.083px">120.8</span>
<span class="t" id="t49" style="left:286.20px;top:143.00px;font-size:11px;color:#000;letter-spacing:-0.083px">106.2</span>
<span class="t" id="t50" style="left:286.20px;top:161.00px;font-size:11px;color:#000;letter-spacing:-0.074px">91.6</span>
<span class="t" id="t51" style="left:286.20px;top:179.00px;font-size:11px;color:#000;letter-spacing:-0.074px">77.0</span>
<span class="t" id="t52" style="left:286.20px;top:197.00px;font-size:11px;color:#000;letter-spacing:-0.074px">62.4</span>
<span class="t" id="t53" style="left:286.20px;top:215.00px;font-size:11px;color:#000;letter-spacing:-0.074px">47.8</span>
<span class="t" id="t54" style="left:286.20px;top:233.00px;font-size:11px;color:#000;letter-spacing:-0.074px">33.2</span>
<span class="t" id="t55" style="left:286.20px;top:251.00px;font-size:11px;color:#000;letter-spacing:-0.074px">18.6</span>
<span class="t" id="t56" style="left:286.20px;top:269.00px;font-size:11px;color:#000;letter-spacing:0.052px">4.0</span>
<span class="t" id="t57" style="left:1027.80px;top:68.00px;font-size:11px;color:#000;letter-spacing:-0.282px">Preview Mode</span>
<span class="t" id="t58" style="left:260.90px;top:814.00px;font-size:11px;color:#000;letter-spacing:-0.190px">Toolhead Position</span>
<span class="t" id="t59" style="left:260.90px;top:832.00px;font-size:11px;color:#000;letter-spacing:-0.080px">X: 100.000</span>
<span class="t" id="t60" style="left:260.90px;top:850.00px;font-size:11px;color:#000;letter-spacing:-0.012px">Y: 200.000</span>
<span class="t" id="t61" style="left:260.90px;top:868.00px;font-size:11px;color:#000;letter-spacing:0.002px">Z: 79.940</span>
</body></html>
